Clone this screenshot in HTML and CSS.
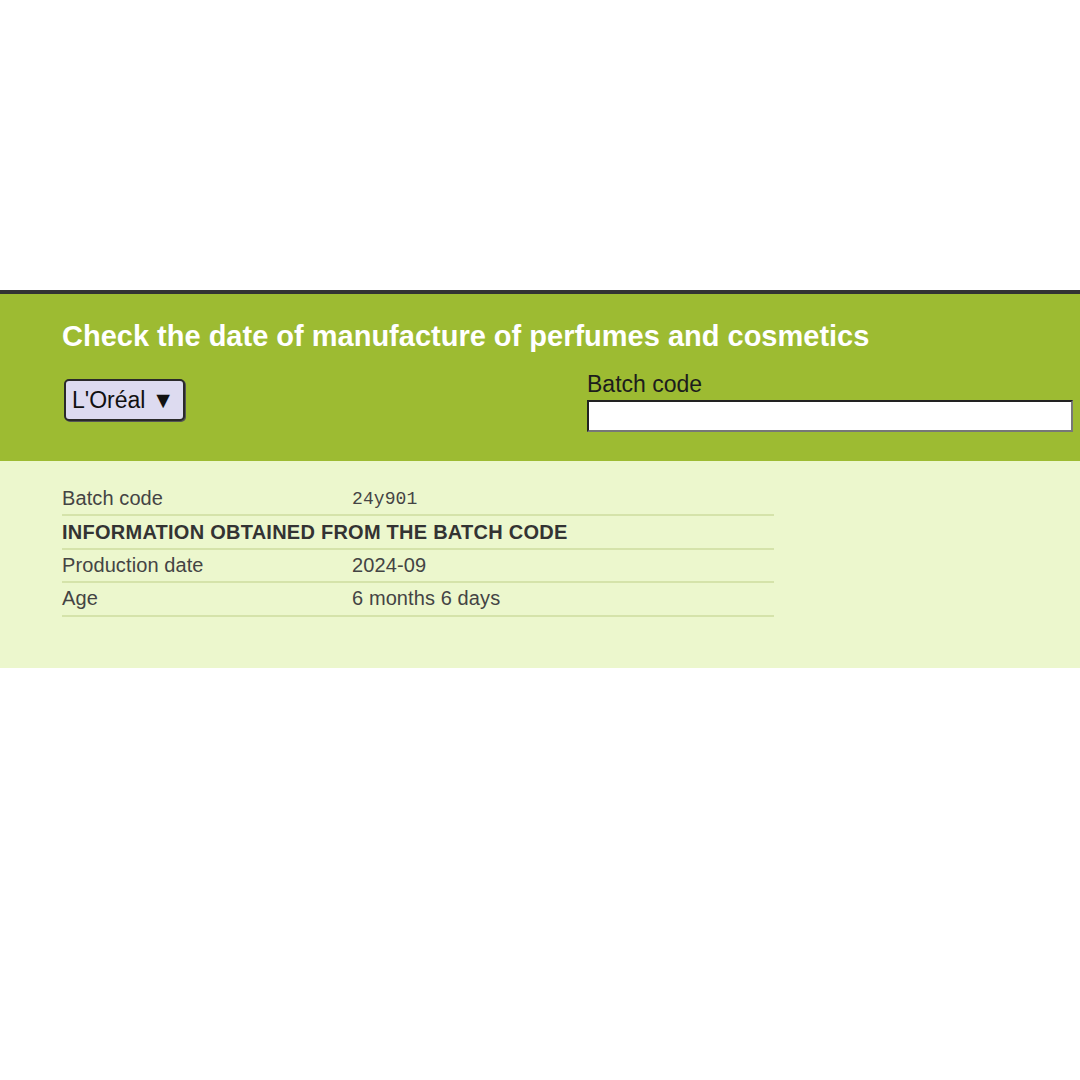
FILE: index.html
```html
<!DOCTYPE html>
<html lang="en">
<head>
    <meta charset="UTF-8">
    <meta name="viewport" content="width=device-width, initial-scale=1.0">
    <title>Check the date of manufacture</title>
    <link rel="stylesheet" href="styles.css">
</head>
    <body>
        <div class="page">
            <div class="checker">
                <h1>Check the date of manufacture of perfumes and cosmetics</h1>
                <form class="controls">
                    <div class="brand">
                        <button type="button" class="brand-btn">L'Oréal &#9660;</button>
                    </div>
                    <div class="batch">
                        <label for="code">Batch code</label>
                        <input type="text" id="code">
                    </div>
                </form>
            </div>
            <div class="result">
                <table>
                    <tr>
                        <td class="key">Batch code</td>
                        <td class="mono">24y901</td>
                    </tr>
                    <tr>
                        <th colspan="2">INFORMATION OBTAINED FROM THE BATCH CODE</th>
                    </tr>
                    <tr>
                        <td class="key">Production date</td>
                        <td>2024-09</td>
                    </tr>
                    <tr>
                        <td class="key">Age</td>
                        <td>6 months 6 days</td>
                    </tr>
                </table>
            </div>
        </div>
    </body>
</html>
```

FILE: styles.css
```css
body
{
    margin: 0;
    background: white;
    font-family: "Liberation Sans", Arial, sans-serif;
}
.page
{
    padding-top: 290px;
}
.checker
{
    border-top: 4px solid #333;
    background: #9dbb32;
    padding: 26px 0 29px 62px;
}
h1
{
    margin: 0;
    font-size: 29px;
    line-height: 32px;
    color: white;
}
.controls
{
    display: flex;
    margin-top: 17px;
}
.brand
{
    width: 523px;
    padding-left: 2px;
}
.brand-btn
{
    margin-top: 10px;
    height: 42px;
    padding: 0 8px 0 6px;
    background: #dddbf0;
    border: 2px solid #2a2a2a;
    border-radius: 5px;
    box-shadow: 1px 1px 0 #555;
    font-family: "Liberation Sans", Arial, sans-serif;
    font-size: 23px;
    color: #111;
    cursor: pointer;
}
.batch
{
    display: flex;
    flex-direction: column;
    width: 486px;
}
.batch label
{
    font-size: 23px;
    line-height: 26px;
    padding-top: 2px;
    color: #1c1c1c;
}
.batch input
{
    box-sizing: border-box;
    width: 100%;
    height: 32px;
    margin-top: 3px;
    border: 2px solid;
    border-color: #222 #777 #777 #222;
    background: white;
    font-size: 18px;
}
.result
{
    background: #ecf7cd;
    padding: 22px 0 51px 62px;
}
table
{
    width: 712px;
    border-collapse: collapse;
    font-size: 20px;
    color: #444;
}
td, th
{
    height: 31.4px;
    padding: 0;
    border-bottom: 2px solid #d5e3aa;
    text-align: left;
    letter-spacing: 0.1px;
}
th
{
    font-weight: bold;
    color: #333;
    letter-spacing: 0.25px;
}
.key
{
    width: 290px;
}
.mono
{
    font-family: "Liberation Mono", "Courier New", monospace;
    font-size: 18px;
}
```
